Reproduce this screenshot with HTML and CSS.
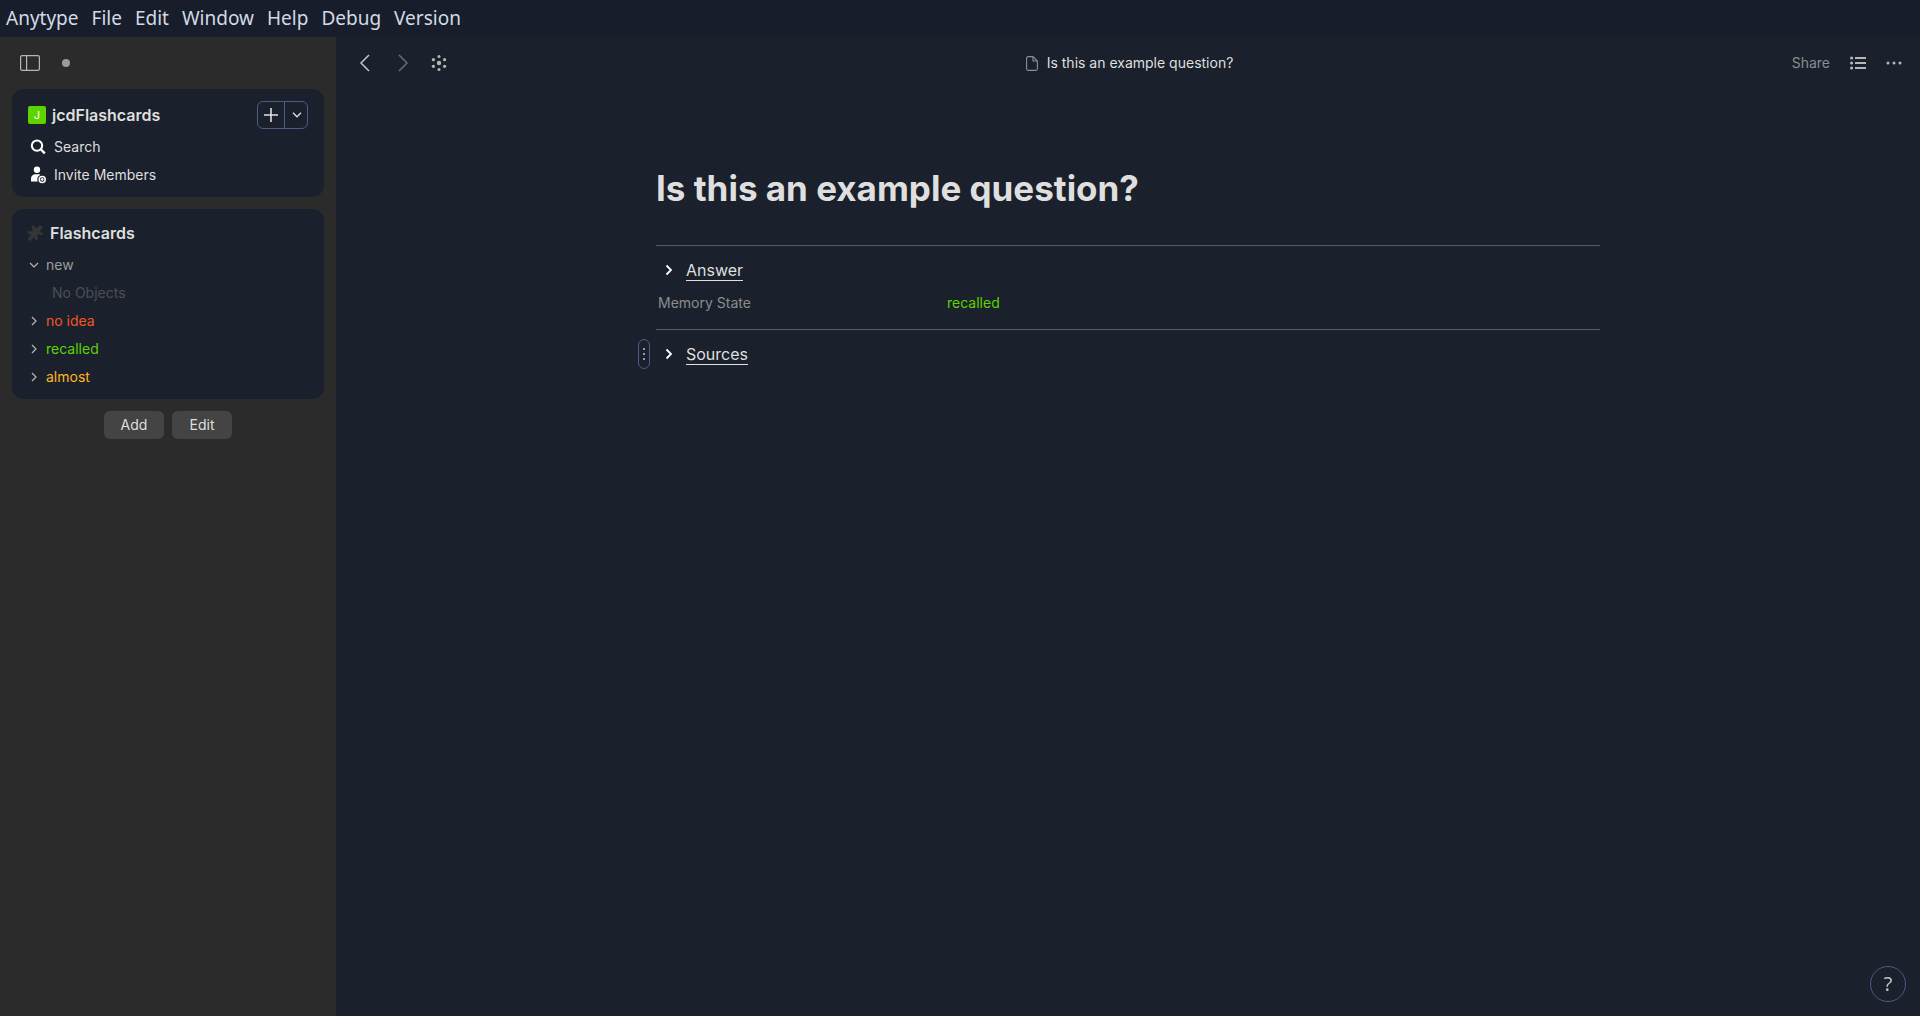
FILE: index.html
```html
<!DOCTYPE html>
<html lang="en">
<head>
<meta charset="utf-8">
<title>Anytype</title>
<link rel="stylesheet" href="styles.css">
</head>
<body>
<nav class="menubar" aria-label="Application menu">
  <button>Anytype</button>
  <button>File</button>
  <button>Edit</button>
  <button>Window</button>
  <button>Help</button>
  <button>Debug</button>
  <button>Version</button>
</nav>
<div class="app">
  <aside class="sidebar">
    <div class="sidebar-head">
      <button class="icon-button" aria-label="Toggle sidebar">
        <svg width="20" height="16" viewBox="0 0 20 16" fill="none" stroke="#b6b6b6"><rect x=".6" y=".6" width="18.8" height="14.8" rx="1.6" stroke-width="1.2"/><path d="M6.6 1v14" stroke-width="1.2"/></svg>
      </button>
      <span class="sync-dot"></span>
    </div>

    <section class="card">
      <div class="space-head">
        <span class="space-icon">J</span>
        <h2 class="space-name">jcdFlashcards</h2>
        <div class="create">
          <button class="create-plus" aria-label="Create object"><svg width="14" height="14" viewBox="0 0 14 14"><path d="M7 0v14M0 7h14" stroke="#dfdfdf" stroke-width="1.6"/></svg></button>
          <button class="create-arrow" aria-label="Choose type"><svg width="10" height="6" viewBox="0 0 10 6" fill="none"><path d="M1 .8l4 4 4-4" stroke="#dfdfdf" stroke-width="1.3"/></svg></button>
        </div>
      </div>
      <button class="row">
        <svg class="row-icon" width="16" height="16" viewBox="0 0 16 16" fill="none" stroke="#fff"><circle cx="7" cy="6.6" r="5.2" stroke-width="2"/><path d="M10.6 10.2l4.2 4.2" stroke-width="2.4"/></svg>
        <span>Search</span>
      </button>
      <button class="row">
        <svg class="row-icon" width="16" height="18" viewBox="0 0 16 18"><circle cx="7" cy="3.700" r="3.200" fill="#fff"/><path d="M1 15.500v-2.700C1 10 3 8.300 5.500 8.300h2.800c1 0 1.600.1 2.100.4a4.900 4.900 0 0 0-2.500 6.900H2z" fill="#fff"/><circle cx="12.200" cy="13.400" r="3" fill="none" stroke="#fff" stroke-width="1.500"/><path d="M12.200 11.900v3M10.700 13.400h3" stroke="#fff" stroke-width="1.200"/></svg>
        <span>Invite Members</span>
      </button>
    </section>

    <section class="card">
      <div class="widget-head">
        <svg width="18" height="18" viewBox="0 0 18 18" fill="#333536"><path d="M6.300 4.600C5 2.500 6 1.300 7.300 1.500c1.500.2 1.500 1.500 2.400 2.300.9.700 2-.1 2.800-1.200.9-1.300 2.600-1.600 3.600-.7 1.100 1.100.6 2.600-.6 3.300-1.200.7-1.700 1.600-1.200 2.400.6 1 2.300.7 2.500 2.200.1 1-.7 1.700-1.800 1.800-.8-1.300-2.200-1.700-3.200-.9-1 .9-.7 2.200.6 3.200-.3 1.200-1 2-2 2.300-1.300-.1-1.200-1.900-2.200-2.400-1-.5-1.500.5-2.200 1.700-.8 1.300-2.300 1.600-3.400.6-1.100-1.100-.8-2.600.5-3.400 1-.7 1.800-1.300 1.200-2.300C3.600 9.400 1.600 9.900 1.300 8.300 1.100 7 2.700 6.100 4.700 7.300c1.500.5 2.700-.9 1.600-2.700z"/></svg>
        <h2 class="widget-name">Flashcards</h2>
      </div>
      <button class="row group grey" aria-expanded="true"><svg width="12" height="12" viewBox="0 0 12 12" fill="none"><path d="M2 4l4 4 4-4" stroke="#b6b6b6" stroke-width="1.200"/></svg><span>new</span></button>
      <p class="empty">No Objects</p>
      <button class="row group red" aria-expanded="false"><svg width="12" height="12" viewBox="0 0 12 12" fill="none"><path d="M4 2l4 4-4 4" stroke="#b6b6b6" stroke-width="1.200"/></svg><span>no idea</span></button>
      <button class="row group lime" aria-expanded="false"><svg width="12" height="12" viewBox="0 0 12 12" fill="none"><path d="M4 2l4 4-4 4" stroke="#b6b6b6" stroke-width="1.200"/></svg><span>recalled</span></button>
      <button class="row group yellow" aria-expanded="false"><svg width="12" height="12" viewBox="0 0 12 12" fill="none"><path d="M4 2l4 4-4 4" stroke="#b6b6b6" stroke-width="1.200"/></svg><span>almost</span></button>
    </section>

    <div class="actions">
      <button>Add</button>
      <button>Edit</button>
    </div>
  </aside>

  <main class="page">
    <header class="topbar">
      <div class="side">
        <button class="icon-button" aria-label="Back"><svg width="20" height="20" viewBox="0 0 20 20" fill="none"><path d="M14 2l-8 8 8 8" stroke="#c4c4c4" stroke-width="1.500"/></svg></button>
        <button class="icon-button" aria-label="Forward"><svg width="20" height="20" viewBox="0 0 20 20" fill="none"><path d="M6 2l8 8-8 8" stroke="#6a6d74" stroke-width="1.500"/></svg></button>
        <button class="icon-button" aria-label="Graph"><svg width="20" height="20" viewBox="0 0 20 20" fill="#b6b6b6"><circle cx="8" cy="10" r="2.200"/><circle cx="8" cy="3.400" r="1.500"/><circle cx="8" cy="16.600" r="1.500"/><circle cx="2.400" cy="6.700" r="1.600"/><circle cx="13.600" cy="6.700" r="1.600"/><circle cx="2.400" cy="13.300" r="1.600"/><circle cx="13.600" cy="13.300" r="1.600"/></svg></button>
      </div>
      <div class="crumb">
        <svg width="12" height="15" viewBox="0 0 12 15" fill="none" stroke="#8c8e92"><path d="M7 .6H2.200A1.600 1.600 0 0 0 .6 2.200v10.600a1.600 1.600 0 0 0 1.600 1.600h7.600a1.600 1.600 0 0 0 1.600-1.600V5L7 .6V5h4.400" stroke-width="1.100"/></svg>
        <span>Is this an example question?</span>
      </div>
      <div class="side end">
        <button class="share">Share</button>
        <button class="icon-button" aria-label="Table of contents"><svg width="20" height="20" viewBox="0 0 20 20" fill="#b6b6b6"><circle cx="3.600" cy="5" r="1.600"/><circle cx="3.600" cy="10" r="1.600"/><circle cx="3.600" cy="15" r="1.600"/><path d="M7 4h11v2H7zM7 9h11v2H7zM7 14h11v2H7z"/></svg></button>
        <button class="icon-button" aria-label="More"><svg width="20" height="20" viewBox="0 0 20 20" fill="#b6b6b6"><circle cx="4" cy="10" r="1.500"/><circle cx="10" cy="10" r="1.500"/><circle cx="16" cy="10" r="1.500"/></svg></button>
      </div>
    </header>

    <article class="editor">
      <h1 class="title">Is this an example question?</h1>
      <hr class="divider">
      <div class="toggle">
        <button class="toggle-arrow" aria-label="Expand Answer"><svg width="8" height="12" viewBox="0 0 8 12" fill="none"><path d="M1.500 1.500L6 6l-4.500 4.500" stroke="#fff" stroke-width="1.800"/></svg></button>
        <span class="underlined">Answer</span>
      </div>
      <dl class="relation">
        <dt>Memory State</dt>
        <dd>recalled</dd>
      </dl>
      <hr class="divider">
      <div class="toggle">
        <button class="handle" aria-label="Block menu"><svg width="2" height="12" viewBox="0 0 2 12" fill="#9a9b9d"><path d="M0 0h2v2H0zM0 5h2v2H0zM0 10h2v2H0z"/></svg></button>
        <button class="toggle-arrow" aria-label="Expand Sources"><svg width="8" height="12" viewBox="0 0 8 12" fill="none"><path d="M1.500 1.500L6 6l-4.500 4.500" stroke="#fff" stroke-width="1.800"/></svg></button>
        <span class="underlined">Sources</span>
      </div>
    </article>
    <button class="help" aria-label="Help">?</button>
  </main>
</div>
</body>
</html>
```
FILE: styles.css
```css
* {
  box-sizing: border-box;
}

body {
  margin: 0;
  min-height: 100vh;
  display: flex;
  flex-direction: column;
  background: #1b212c;
  color: #dfdfdf;
  font: 14px/20px Inter, "Liberation Sans", sans-serif;
}

button {
  margin: 0;
  padding: 0;
  border: 0;
  background: none;
  color: inherit;
  font: inherit;
  cursor: pointer;
}

h1,
h2,
p,
dl,
dd {
  margin: 0;
}

svg {
  display: block;
  flex: none;
}

.menubar {
  display: flex;
  gap: 13px;
  height: 37px;
  padding: 0 6px 2px;
  align-items: center;
  background: #171d2b;
  color: #d3dae3;
  font: 19px/28px "Noto Sans", sans-serif;
}

.app {
  flex: 1;
  display: flex;
}

.sidebar {
  flex: none;
  width: 336px;
  padding: 0 12px;
  display: flex;
  flex-direction: column;
  gap: 12px;
  background: #2b2b2b;
}

.sidebar-head {
  display: flex;
  align-items: center;
  gap: 22px;
  height: 52px;
  padding: 0 8px;
  margin-bottom: -12px;
}

.sync-dot {
  width: 8px;
  height: 8px;
  border-radius: 50%;
  background: #9a9b9d;
}

.card {
  padding: 8px 16px;
  border-radius: 12px;
  background: #1b212c;
}

.space-head {
  display: flex;
  align-items: center;
  gap: 6px;
  height: 36px;
}

.space-icon {
  width: 18px;
  height: 18px;
  border-radius: 2px;
  background: #5dd400;
  color: #fff;
  font-size: 11px;
  line-height: 18px;
  text-align: center;
}

.space-name,
.widget-name {
  font-size: 16px;
  font-weight: 600;
  line-height: 24px;
}

.create {
  display: flex;
  width: 51px;
  height: 28px;
  margin-left: auto;
  border: 1px solid #4a5c86;
  border-radius: 6px;
}

.create button {
  display: flex;
  align-items: center;
  justify-content: center;
}

.create-plus {
  flex: 1;
}

.create .create-arrow {
  width: 23px;
  padding-left: 1px;
  border-left: 1px solid #4a5c86;
}

.row {
  display: flex;
  align-items: center;
  gap: 8px;
  width: 100%;
  height: 28px;
  padding-left: 2px;
}

.widget-head {
  display: flex;
  align-items: center;
  gap: 6px;
  height: 32px;
  margin: 0 -2px 2px;
}

.group {
  gap: 6px;
  padding: 0;
}

.grey {
  color: #9a9b9d;
}

.red {
  color: #f55522;
}

.lime {
  color: #5dd400;
}

.yellow {
  color: #ffb522;
}

.empty {
  padding-left: 24px;
  color: #4c4e52;
  line-height: 28px;
}

.actions {
  display: flex;
  justify-content: center;
  gap: 8px;
}

.actions button {
  width: 60px;
  height: 28px;
  border-radius: 6px;
  background: #444;
}

.page {
  flex: 1;
  min-width: 0;
}

.topbar {
  display: flex;
  align-items: center;
  height: 52px;
  padding: 0 16px 0 19px;
}

.side {
  flex: 1;
  display: flex;
  align-items: center;
  gap: 18px;
}

.side.end {
  justify-content: flex-end;
  gap: 16px;
}

.icon-button {
  display: flex;
}

.share {
  margin-right: 2px;
  color: #8c8c8c;
}

.crumb {
  display: flex;
  align-items: center;
  gap: 9px;
}

.editor {
  width: 60%;
  max-width: 944px;
  margin: 0 auto;
  padding-top: 77px;
}

.title {
  font-size: 35px;
  font-weight: 700;
  line-height: 44px;
}

.divider {
  height: 1px;
  margin: 0;
  border: 0;
  background: #5a5a5b;
}

.title + .divider {
  margin-top: 35px;
}

.toggle {
  position: relative;
  display: flex;
  align-items: center;
  height: 48px;
  font-size: 16px;
}

.toggle-arrow {
  width: 26px;
  height: 24px;
  margin-right: 4px;
  display: flex;
  align-items: center;
  justify-content: center;
}

.underlined {
  border-bottom: 1px solid #dfdfdf;
  line-height: 20px;
}

.handle {
  position: absolute;
  left: -18px;
  top: 9px;
  width: 12px;
  height: 30px;
  display: flex;
  align-items: center;
  justify-content: center;
  border: 1px solid #4a5c86;
  border-radius: 6px;
}

.relation {
  display: grid;
  grid-template-columns: 289px 1fr;
  margin-top: -1px;
  padding: 0 2px 16px;
}

.relation dt {
  color: #8c8c8c;
}

.relation dd {
  color: #5dd400;
}

.help {
  position: fixed;
  right: 14px;
  bottom: 14px;
  width: 36px;
  height: 36px;
  border: 1px solid #4a5c86;
  border-radius: 50%;
  color: #c4c4c4;
  font: 20px/34px "Noto Sans", sans-serif;
}
```
